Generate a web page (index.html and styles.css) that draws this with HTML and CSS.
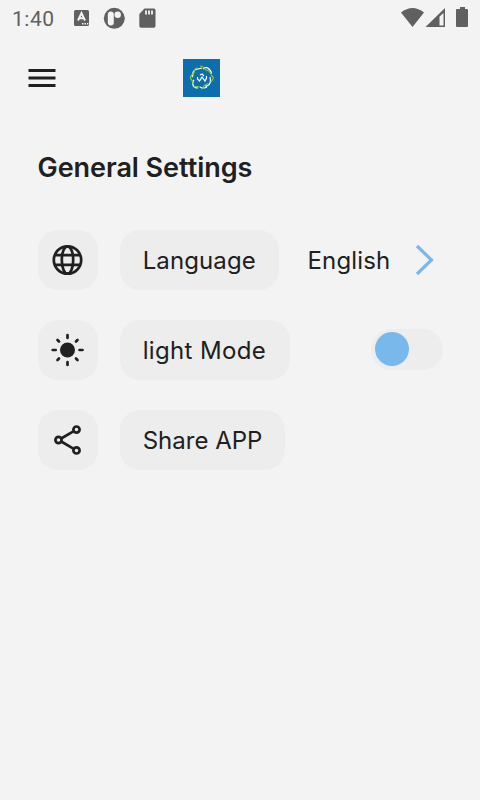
FILE: index.html
```html
<!DOCTYPE html>
<html lang="en">
<head>
<meta charset="utf-8">
<title>General Settings</title>
<link rel="stylesheet" href="styles.css">
</head>
<body>
<div class="status">
  <span class="time">1:40</span>
  <svg class="notices" width="84" height="24" viewBox="0 0 84 24" fill="#606060">
    <rect x="1" y="4" width="15" height="16" rx="1.5"/>
    <path d="M5 14.500 8.500 7 12 14.500M6.200 12.200h4.600" fill="none" stroke="#f3f3f3" stroke-width="2"/>
    <path d="M9 17h1.500v1.500H9zM11.500 17H13v1.500h-1.500zM14 17h1.300v1.500H14z" fill="#f3f3f3"/>
    <circle cx="41.300" cy="12.300" r="10.500"/>
    <rect x="34.800" y="5.500" width="6" height="14" rx="3" fill="#f3f3f3"/>
    <circle cx="44.700" cy="8.800" r="3.200" fill="#f3f3f3"/>
    <path d="M71.500 2.500H81q1.500 0 1.500 1.500v16q0 1.700-1.700 1.700H68q-1.700 0-1.700-1.700V8z"/>
    <path d="M73 4.500v4m3-4v4m3-4v4" stroke="#f3f3f3" stroke-width="1.800"/>
  </svg>
  <svg class="signals" width="70" height="24" viewBox="0 0 70 24" fill="#606060">
    <path d="M1 6.500Q12.500-2.500 24 6.500L12.500 21z"/>
    <path fill-rule="evenodd" d="M45 2v19H25.500zM39.500 10.500V19.500H43.500V7z"/>
    <path d="M60 1h5v2h2q1 0 1 1v16q0 1-1 1H57q-1 0-1-1V4q0-1 1-1h3z"/>
  </svg>
</div>
<header class="bar">
  <svg width="28" height="20" viewBox="0 0 28 20" fill="#202020"><path d="M.5 1h27v3H.5zM.5 8.500h27v3H.5zM.5 16h27v3H.5z"/></svg>
  <svg class="logo" width="37" height="38" viewBox="0 0 37 38">
    <path fill="#0d6eae" d="M0 0h37v38H0z"/>
    <g fill="none" stroke-width="1.200">
      <path stroke="#fff" d="M9 18q1-1 1-4t5-4l4-1M20 10q3-3 6 0t2 5M27 18q1 3 0 6t-5 3M24 28q-3 2-7 0M15 29q-4 0-5-3t1-5M14.500 18v2l2 2 2.500-4 3 4 1.500-3v-2M17 16l2-1 2 2"/>
      <path stroke="#8ccc2c" d="M11 14q0-5 4-5M17 7q3 0 4 2t5 3l2 3M28 16q3 2 2 4l-2 3M26 25q-3-1-5 2t-3 3M17 28q-3-1-6 0M10 25q0-3-2-5t2-5"/>
    </g>
  </svg>
</header>
<main>
  <h1><span>General Settings</span></h1>
  <section class="row">
    <div class="tile"><svg width="32" height="32" viewBox="0 0 32 32" fill="none" stroke="#202020" stroke-width="2.700"><circle cx="15.500" cy="16" r="13.700"/><ellipse cx="15.500" cy="16" rx="5.700" ry="13.700"/><path d="M3 11.200h25M3 20.800h25"/></svg></div>
    <div class="label language"><span>Language</span></div>
    <div class="value"><span>English</span></div>
    <svg class="chevron" width="20" height="32" viewBox="0 0 20 32" fill="none" stroke="#78b8eb" stroke-width="3.200"><path d="M2 2 16.500 16 2 30"/></svg>
  </section>
  <section class="row">
    <div class="tile"><svg width="34" height="34" viewBox="0.500 0 34 34" fill="#202020" stroke="#202020" stroke-width="2.700" stroke-linecap="round"><circle cx="17" cy="17" r="7.500" stroke="none"/><path d="M17 2v3M17 29v3M2.200 17h3M29 17h3M7 7l1.500 1.500M25.500 25.500 27 27M27 7l-1.500 1.500M8.500 25.500 7 27"/></svg></div>
    <div class="label light"><span>light Mode</span></div>
    <div class="switch"><div class="thumb"></div></div>
  </section>
  <section class="row">
    <div class="tile"><svg width="32" height="32" viewBox="0.500 0 32 32" fill="none" stroke="#202020" stroke-width="2.700"><circle cx="7" cy="16" r="3.100"/><circle cx="25" cy="5.600" r="3.100"/><circle cx="25" cy="26.400" r="3.100"/><path d="M9.700 14.500 22.300 7.200M9.700 17.500l12.600 7.300"/></svg></div>
    <div class="label share"><span>Share APP</span></div>
  </section>
</main>
</body>
</html>
```
FILE: styles.css
```css
body { margin: 0; height: 800px; background: #f3f3f3; color: #202020; font-family: Inter, "Noto Sans", sans-serif; overflow: hidden; }
svg { display: block; flex: none; }
.status { display: flex; align-items: center; height: 36px; padding: 0 10px 0 12px; color: #606060; }
.time { width: 61px; font: 400 21px/36px Roboto, sans-serif; letter-spacing: .5px; padding-top: 1px; box-sizing: border-box; }
.signals { margin-left: auto; margin-top: -1px; }
.bar { display: flex; align-items: center; height: 84px; padding-left: 28px; }
.logo { margin-left: 127px; }
main { padding: 28px 37.500px 0 37.500px; }
h1 { margin: 0 0 42px; font-size: 27px; line-height: 40px; font-weight: 600; letter-spacing: -.05px; white-space: nowrap; }
.row { display: flex; align-items: center; height: 60px; margin-bottom: 30px; font-size: 24px; white-space: nowrap; }
.tile { display: flex; align-items: center; justify-content: center; width: 60px; height: 60px; border-radius: 20px; background: #ededed; }
.label { box-sizing: border-box; height: 60px; line-height: 61px; margin-left: 22.500px; padding-left: 22.700px; border-radius: 20px; background: #ededed; }
.language { width: 159px; letter-spacing: .1px; }
.light { width: 170px; letter-spacing: .35px; }
.share { width: 165.300px; }
.value { width: 107.500px; margin-left: 28.500px; line-height: 61px; letter-spacing: .15px; }
.switch { box-sizing: border-box; width: 72px; height: 41px; margin: 0 0 2px auto; padding: 3.500px 4.500px; border-radius: 21px; background: #ededed; }
.thumb { width: 34px; height: 34px; border-radius: 50%; background: #78b8eb; }
```
